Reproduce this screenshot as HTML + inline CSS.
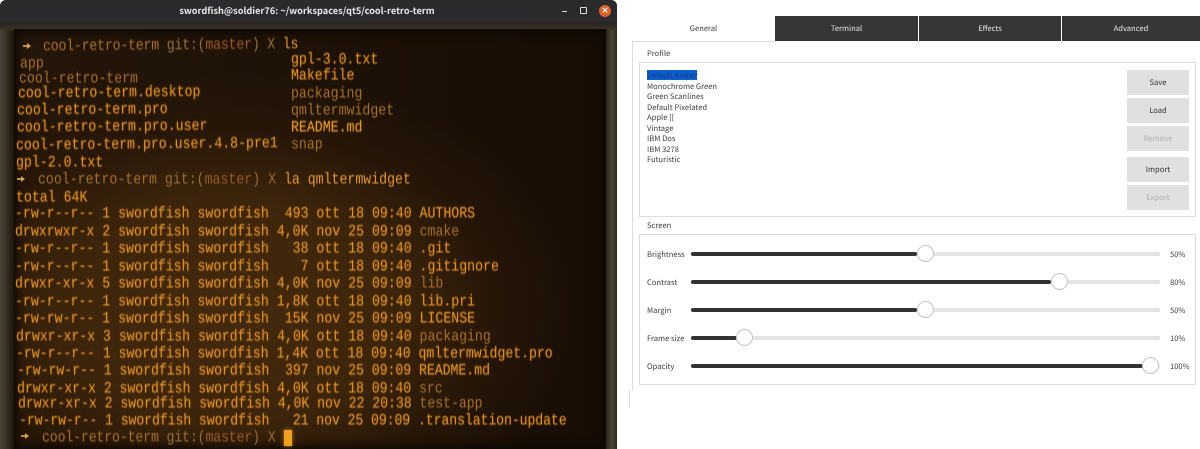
<!DOCTYPE html>
<html><head><meta charset="utf-8">
<style>
html,body{margin:0;padding:0;background:#fff;}
#p{position:relative;width:1200px;height:449px;overflow:hidden;background:#fff;font-family:"Noto Sans CJK JP","Liberation Sans",sans-serif;text-rendering:geometricPrecision;}
#win{position:absolute;left:0;top:0;width:617px;height:449px;background:#241d14;border-radius:6px 6px 0 0;overflow:hidden;}
#tb{position:absolute;left:0;top:0;width:617px;height:22px;background:#2b2b2d;}
#title{position:absolute;left:0;top:0;width:614px;text-align:center;font:bold 9.2px/21px "Noto Sans CJK JP",sans-serif;color:#e8e8e8;}
#fr{position:absolute;left:0;top:22px;width:617px;height:427px;background:linear-gradient(90deg,#4a4235 0,#3a3226 6px,#1c140b 14px,#1c140b 603px,#4d4436 612px,#2e281f 617px);}
#ft{position:absolute;left:0;top:22px;width:617px;height:8px;background:linear-gradient(180deg,#27241f,#3a3226);}
#sc{position:absolute;left:14px;top:29px;width:592px;height:420px;background:
 radial-gradient(ellipse 360px 240px at 215px 280px,#43290d 0,#3d250b 45%,rgba(42,24,8,.7) 75%,rgba(24,14,5,0) 100%),
 linear-gradient(90deg,#241609,#170d05);box-shadow:inset 0 0 10px 3px #0c0703;}
#txt{position:absolute;left:0;top:1px;width:617px;height:449px;}
.l{position:absolute;white-space:pre;font:13.23px/16px "Liberation Mono",monospace;color:#e0922e;transform:scaleY(1.2);transform-origin:0 50%;text-shadow:0 0 2px rgba(230,130,30,.35);filter:blur(.35px);}
.r{transform:rotate(-.5deg) scaleY(1.2);}
.d{color:#a8702f;text-shadow:none;}
.g{color:#96703c;text-shadow:none;}
.m{color:#9c5a28;text-shadow:none;}
.b{color:#e89a34;}
.a{position:absolute;width:8px;height:6px;filter:blur(.3px);}
#cur{position:absolute;left:284px;top:430px;width:8px;height:16px;background:#f0a020;box-shadow:0 0 4px #d08010;}
.t{position:absolute;font-size:7.6px;color:#3c3c3c;white-space:pre;line-height:12px;margin-top:1px;}
.tab{position:absolute;top:16px;height:25px;background:#363636;color:#e8e8e8;font-size:7.6px;line-height:25px;text-align:center;}
.box{position:absolute;border:1px solid #dcdcdc;box-sizing:border-box;}
.btn{position:absolute;left:1127px;width:62px;height:25px;background:#e0e0e0;text-align:center;font-size:7.6px;line-height:26px;color:#333;}
.dis{color:#b0b0b0;}
.tr{position:absolute;left:691px;width:469px;height:4px;background:#e4e4e4;border-radius:2px;}
.fi{position:absolute;left:691px;height:4px;background:#333;border-radius:2px;}
.h{position:absolute;width:17px;height:17px;box-sizing:border-box;border-radius:50%;background:#fff;border:1px solid #c4c4c4;}
</style></head><body><div id="p">
<div id="win">
<div id="tb"></div>
<div id="title">swordfish@soldier76: ~/workspaces/qt5/cool-retro-term</div>
<div style="position:absolute;left:562px;top:11px;width:5px;height:1px;background:#ddd"></div>
<div style="position:absolute;left:580px;top:7px;width:7px;height:7px;box-sizing:border-box;border:1px solid #ddd;border-radius:1px"></div>
<div style="position:absolute;left:599px;top:5px;width:12px;height:12px;border-radius:50%;background:#d9622f;color:#fff;font:bold 9px/12px 'DejaVu Sans',sans-serif;text-align:center">×</div>
<div id="fr"></div><div id="ft"></div><div id="sc"></div>
<div id="txt">
<svg class="a" style="left:23px;top:42px" viewBox="0 0 8 6"><path d="M0 2.1H4V0L8 3L4 6V3.9H0Z" fill="#d9a050"/></svg>
<div class="l d r" style="left:43px;top:38px;letter-spacing:-.2px">cool-retro-term <span class="g">git:(</span><span class="m">master</span><span class="g">)</span> <span class="g">X</span> <span class="b">ls</span></div>
<div class="l d" style="left:20px;top:55px">app</div>
<div class="l d" style="left:19px;top:70px">cool-retro-term</div>
<div class="l r" style="left:18px;top:85px">cool-retro-term.desktop</div>
<div class="l r" style="left:17px;top:102px">cool-retro-term.pro</div>
<div class="l r" style="left:17px;top:119px">cool-retro-term.pro.user</div>
<div class="l r" style="left:16px;top:137px">cool-retro-term.pro.user.4.8-pre1</div>
<div class="l" style="left:16px;top:154px">gpl-2.0.txt</div>
<div class="l" style="left:291px;top:51px">gpl-3.0.txt</div>
<div class="l" style="left:291px;top:67px">Makefile</div>
<div class="l d" style="left:291px;top:85px">packaging</div>
<div class="l d" style="left:291px;top:102px">qmltermwidget</div>
<div class="l b" style="left:291px;top:119px">README.md</div>
<div class="l d" style="left:291px;top:136px">snap</div>
<svg class="a" style="left:17px;top:175px" viewBox="0 0 8 6"><path d="M0 2.1H4V0L8 3L4 6V3.9H0Z" fill="#d9a050"/></svg>
<div class="l d" style="left:38px;top:171px">cool-retro-term <span class="g">git:(</span><span class="m">master</span><span class="g">)</span> <span class="g">X</span> <span class="b">la qmltermwidget</span></div>
<div class="l" style="left:16px;top:189px">total 64K</div>
<div class="l" style="left:15px;top:205px">-rw-r--r-- 1 swordfish swordfish  493 ott 18 09:40 AUTHORS</div>
<div class="l" style="left:15px;top:223px">drwxrwxr-x 2 swordfish swordfish 4,0K nov 25 09:09 <span class="d">cmake</span></div>
<div class="l" style="left:15px;top:240px">-rw-r--r-- 1 swordfish swordfish   38 ott 18 09:40 .git</div>
<div class="l" style="left:15px;top:258px">-rw-r--r-- 1 swordfish swordfish    7 ott 18 09:40 .gitignore</div>
<div class="l" style="left:15px;top:275px">drwxr-xr-x 5 swordfish swordfish 4,0K nov 25 09:09 <span class="d">lib</span></div>
<div class="l" style="left:15px;top:293px">-rw-r--r-- 1 swordfish swordfish 1,8K ott 18 09:40 lib.pri</div>
<div class="l" style="left:15px;top:310px">-rw-rw-r-- 1 swordfish swordfish  15K nov 25 09:09 LICENSE</div>
<div class="l" style="left:16px;top:328px;letter-spacing:-.02px">drwxr-xr-x 3 swordfish swordfish 4,0K ott 18 09:40 <span class="d">packaging</span></div>
<div class="l" style="left:16px;top:345px;letter-spacing:-.04px">-rw-r--r-- 1 swordfish swordfish 1,4K ott 18 09:40 qmltermwidget.pro</div>
<div class="l" style="left:17px;top:362px;letter-spacing:-.05px">-rw-rw-r-- 1 swordfish swordfish  397 nov 25 09:09 README.md</div>
<div class="l" style="left:17px;top:380px;letter-spacing:-.05px">drwxr-xr-x 2 swordfish swordfish 4,0K ott 18 09:40 <span class="d">src</span></div>
<div class="l" style="left:18px;top:395px;letter-spacing:-.06px">drwxr-xr-x 2 swordfish swordfish 4,0K nov 22 20:38 <span class="d">test-app</span></div>
<div class="l" style="left:19px;top:412px;letter-spacing:-.11px">-rw-rw-r-- 1 swordfish swordfish   21 nov 25 09:09 .translation-update</div>
<svg class="a" style="left:21px;top:432px" viewBox="0 0 8 6"><path d="M0 2.1H4V0L8 3L4 6V3.9H0Z" fill="#d9a050"/></svg>
<div class="l d" style="left:42px;top:429px;letter-spacing:-.15px">cool-retro-term <span class="g">git:(</span><span class="m">master</span><span class="g">)</span> <span class="g">X</span></div>
</div>
<div id="cur"></div>
</div>

<div class="tab" style="left:775px;width:143px">Terminal</div>
<div class="tab" style="left:919px;width:142px">Effects</div>
<div class="tab" style="left:1062px;width:138px">Advanced</div>
<div class="t" style="left:636px;top:22px;width:135px;text-align:center">General</div>
<div style="position:absolute;left:632px;top:41px;width:143px;height:1px;background:#dcdcdc"></div>
<div style="position:absolute;left:632px;top:41px;width:1px;height:349px;background:#dcdcdc"></div>
<div style="position:absolute;left:629px;top:390px;width:1px;height:18px;background:#dcdcdc"></div>

<div class="t" style="left:647px;top:47px">Profile</div>
<div class="box" style="left:639px;top:62px;width:557px;height:155px"></div>
<div style="position:absolute;left:647px;top:70px;width:50px;height:10px;background:#0d5fd0"></div>
<div class="t" style="left:647px;top:69px;color:#123a78">Default Amber</div>
<div class="t" style="left:647px;top:80px">Monochrome Green</div>
<div class="t" style="left:647px;top:90px">Green Scanlines</div>
<div class="t" style="left:647px;top:101px">Default Pixelated</div>
<div class="t" style="left:647px;top:111px">Apple ][</div>
<div class="t" style="left:647px;top:122px">Vintage</div>
<div class="t" style="left:647px;top:132px">IBM Dos</div>
<div class="t" style="left:647px;top:143px">IBM 3278</div>
<div class="t" style="left:647px;top:153px">Futuristic</div>
<div class="btn" style="top:70px">Save</div>
<div class="btn" style="top:98px">Load</div>
<div class="btn dis" style="top:126px">Remove</div>
<div class="btn" style="top:157px">Import</div>
<div class="btn dis" style="top:185px">Export</div>

<div class="t" style="left:647px;top:219px">Screen</div>
<div class="box" style="left:639px;top:234px;width:557px;height:151px"></div>

<div class="t" style="left:647px;top:248px">Brightness</div>
<div class="tr" style="top:252px"></div><div class="fi" style="top:252px;width:226px"></div><div class="h" style="left:917px;top:245px"></div>
<div class="t" style="left:1170px;top:248px">50%</div>

<div class="t" style="left:647px;top:276px">Contrast</div>
<div class="tr" style="top:280px"></div><div class="fi" style="top:280px;width:360px"></div><div class="h" style="left:1051px;top:273px"></div>
<div class="t" style="left:1170px;top:276px">80%</div>

<div class="t" style="left:647px;top:304px">Margin</div>
<div class="tr" style="top:308px"></div><div class="fi" style="top:308px;width:226px"></div><div class="h" style="left:917px;top:301px"></div>
<div class="t" style="left:1170px;top:304px">50%</div>

<div class="t" style="left:647px;top:332px">Frame size</div>
<div class="tr" style="top:336px"></div><div class="fi" style="top:336px;width:46px"></div><div class="h" style="left:736px;top:329px"></div>
<div class="t" style="left:1170px;top:332px">10%</div>

<div class="t" style="left:647px;top:360px">Opacity</div>
<div class="tr" style="top:364px"></div><div class="fi" style="top:364px;width:452px"></div><div class="h" style="left:1142px;top:357px"></div>
<div class="t" style="left:1170px;top:360px">100%</div>
</div></body></html>
